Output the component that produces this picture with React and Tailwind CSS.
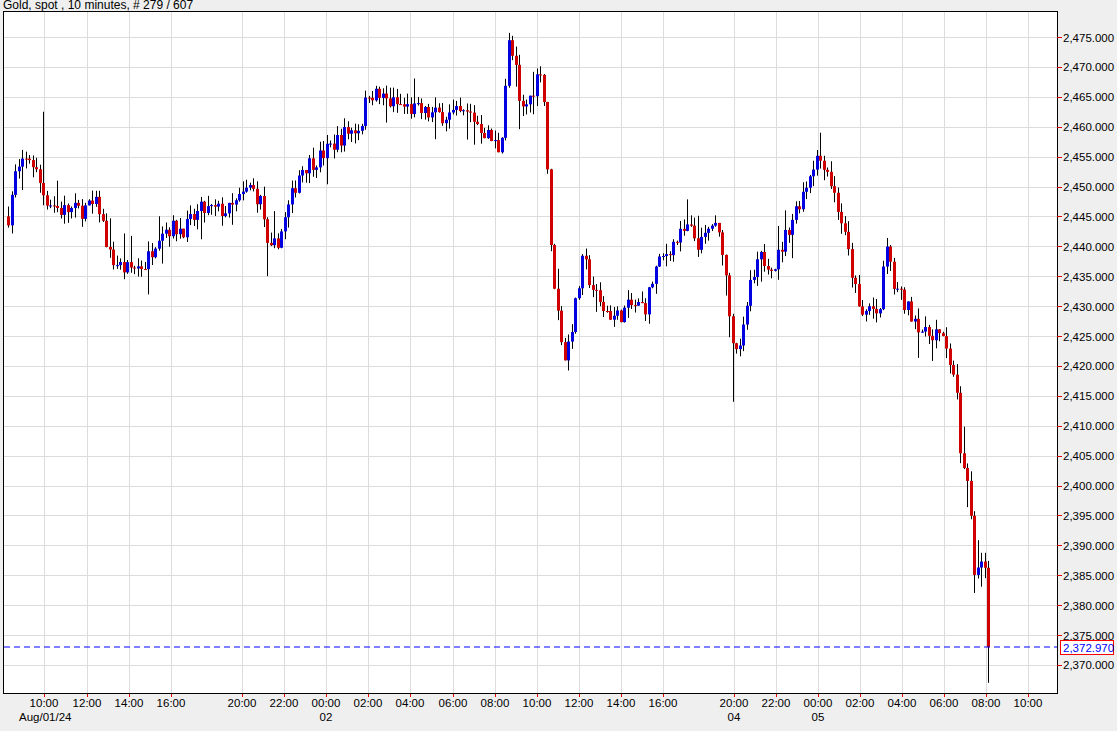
import React from 'react';

const KEYS = [
  [8, 2445], [15, 2452], [30, 2455], [45, 2448], [60, 2446], [80, 2446], [98, 2447], [110, 2438],
  [125, 2436], [145, 2437], [160, 2443], [185, 2443], [200, 2446], [230, 2446], [250, 2450],
  [262, 2447], [268, 2438], [280, 2442], [300, 2453], [320, 2455], [345, 2459], [360, 2460],
  [368, 2466], [390, 2464], [410, 2463], [430, 2462], [470, 2462], [480, 2460], [500, 2456],
  [508, 2474], [515, 2470], [520, 2462], [530, 2465], [540, 2470], [545, 2462], [550, 2440],
  [558, 2428], [565, 2421], [575, 2430], [583, 2438], [590, 2434], [600, 2430], [615, 2428],
  [630, 2430], [645, 2430], [655, 2436], [670, 2440], [688, 2443], [700, 2440], [712, 2444],
  [722, 2440], [732, 2425], [740, 2422], [748, 2432], [760, 2438], [775, 2437], [790, 2444],
  [805, 2450], [815, 2455], [825, 2454], [840, 2445], [850, 2437], [860, 2428], [870, 2430],
  [880, 2428], [885, 2442], [892, 2434], [905, 2430], [915, 2428], [925, 2425], [935, 2426],
  [945, 2423], [955, 2418], [960, 2405], [965, 2403], [970, 2395], [975, 2384], [983, 2388], [990, 2373],
];

const SPIKES = { 44: 2462.5, 266: 2435, 563: 2411, 732: 2414, 820: 2459, 885: 2446 };

const yOf = (p) => 38 + (2475 - p) * 5.98;

function interp(x) {
  for (let i = 1; i < KEYS.length; i++) {
    if (x <= KEYS[i][0]) {
      const [x0, p0] = KEYS[i - 1];
      const [x1, p1] = KEYS[i];
      return p0 + ((x - x0) / (x1 - x0)) * (p1 - p0);
    }
  }
  return KEYS[KEYS.length - 1][1];
}

function buildCandles() {
  let seed = 7;
  const rand = () => {
    seed = (seed * 16807) % 2147483647;
    return seed / 2147483647;
  };
  const out = [];
  let prev = 2445;
  for (let x = 8; x <= 990; x += 3.5) {
    const open = prev;
    let close = interp(x) + (rand() - 0.5) * 3;
    if (x >= 988) close = 2372.97;
    let high = Math.max(open, close) + rand() * 1.8 + (rand() > 0.92 ? 3 : 0);
    let low = Math.min(open, close) - rand() * 1.8 - (rand() > 0.92 ? 3 : 0);
    if (x >= 988) low = 2367;
    const sx = Math.round(x);
    for (const k of Object.keys(SPIKES)) {
      if (Math.abs(sx - Number(k)) < 2) {
        const v = SPIKES[k];
        if (v > high) high = v;
        if (v < low) low = v;
      }
    }
    out.push({ x, open, close, high, low });
    prev = close;
  }
  return out;
}

const candles = buildCandles();

const prices = [];
for (let p = 2370; p <= 2475; p += 5) prices.push(p);

const times = [
  [44, '10:00'], [87, '12:00'], [129, '14:00'], [171, '16:00'], [242, '20:00'], [284, '22:00'],
  [326, '00:00'], [368, '02:00'], [410, '04:00'], [453, '06:00'], [495, '08:00'], [537, '10:00'],
  [579, '12:00'], [621, '14:00'], [663, '16:00'], [734, '20:00'], [776, '22:00'], [818, '00:00'],
  [860, '02:00'], [902, '04:00'], [944, '06:00'], [986, '08:00'], [1028, '10:00'],
];

const dates = [[326, '02'], [734, '04'], [818, '05']];

const fmt = (p) => p.toLocaleString('en-US', { minimumFractionDigits: 3, maximumFractionDigits: 3 });

export default function App() {
  return (
    <div className="w-[1117px] h-[731px] bg-[#efefef] flex flex-col text-[12px] text-black" style={{ fontFamily: '"Liberation Sans", Arial, sans-serif' }}>
      <div className="h-[12px] leading-[12px] pl-[3px] -mt-[1px]">Gold, spot , 10 minutes, # 279 / 607</div>
      <svg width="1117" height="719" viewBox="0 12 1117 719" className="block">
        <rect x="3.5" y="12.5" width="1054" height="682" fill="#fff" stroke="#000" />
        {prices.map((p) => (
          <line key={p} x1="4" x2="1057" y1={Math.round(yOf(p)) + 0.5} y2={Math.round(yOf(p)) + 0.5} stroke="#dcdcdc" />
        ))}
        {times.map(([x]) => (
          <line key={x} x1={x + 0.5} x2={x + 0.5} y1="13" y2="694" stroke="#dcdcdc" />
        ))}
        {candles.map((c, i) => {
          const up = c.close >= c.open;
          const top = yOf(Math.max(c.open, c.close));
          const bot = yOf(Math.min(c.open, c.close));
          const cx = Math.round(c.x) + 0.5;
          return (
            <g key={i}>
              <line x1={cx} x2={cx} y1={yOf(c.high)} y2={yOf(c.low)} stroke="#000" />
              <rect x={cx - 1.5} y={top} width="3" height={Math.max(1, bot - top)} fill={up ? '#0000e0' : '#d00000'} />
            </g>
          );
        })}
        <line x1="4" x2="1057" y1="648" y2="648" stroke="#0000ff" strokeWidth="1.2" strokeDasharray="6 4" />
        {prices.map((p) => (
          <g key={p}>
            <line x1="1057" x2="1062" y1={Math.round(yOf(p)) + 0.5} y2={Math.round(yOf(p)) + 0.5} stroke="#e00000" />
            <text x="1063" y={yOf(p) + 4.5} fontSize="11.5" fill="#000">{fmt(p)}</text>
          </g>
        ))}
        <rect x="1060.5" y="641.5" width="53" height="14" fill="#fff" stroke="#ff0000" />
        <text x="1063" y="652.5" fontSize="11.5" fill="#0000ff">2,372.970</text>
        {times.map(([x, t]) => (
          <g key={x}>
            <line x1={x + 0.5} x2={x + 0.5} y1="695" y2="698" stroke="#e00000" />
            <text x={x} y="708" fontSize="11.5" textAnchor="middle">{t}</text>
          </g>
        ))}
        <text x="19" y="722" fontSize="11.5">Aug/01/24</text>
        {dates.map(([x, d]) => (
          <text key={x} x={x} y="722" fontSize="11.5" textAnchor="middle">{d}</text>
        ))}
      </svg>
    </div>
  );
}
